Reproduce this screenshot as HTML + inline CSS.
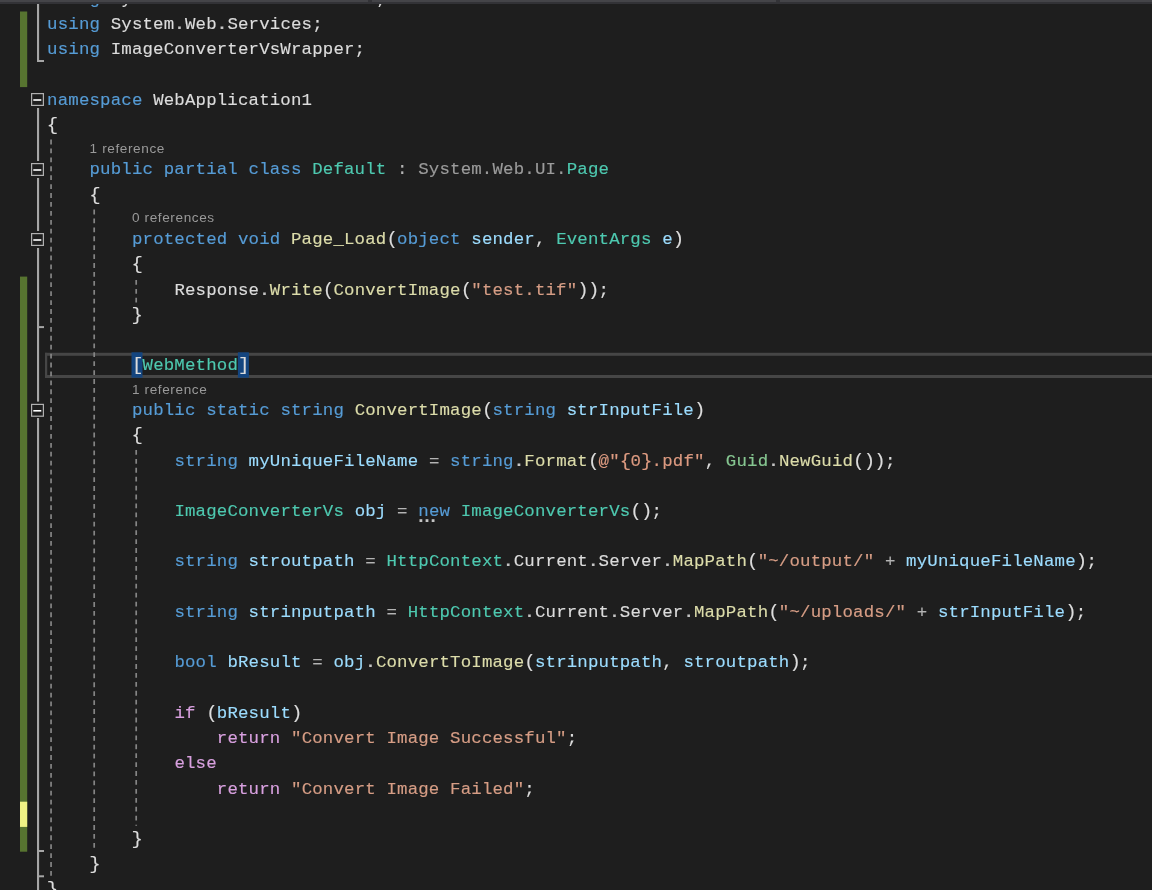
<!DOCTYPE html>
<html><head><meta charset="utf-8"><title>Default.aspx.cs</title>
<style>
html,body{margin:0;padding:0;background:#1e1e1e;}
body{width:1152px;height:890px;overflow:hidden;position:relative;font-family:"Liberation Mono",monospace;}
#ed{position:absolute;left:0;top:0;width:1152px;height:890px;overflow:hidden;background:#1e1e1e;}
.ln{position:absolute;white-space:pre;font-family:"Liberation Mono",monospace;font-size:17.40px;line-height:26px;height:26px;letter-spacing:0.167px;color:#dcdcdc;-webkit-text-stroke-width:0.15px;}
.k{color:#569cd6;}
.c{color:#d8a0df;}
.t{color:#4ec9b0;}
.s{color:#86c691;}
.m{color:#dcdcaa;}
.v{color:#9cdcfe;}
.q{color:#d69d85;}
.Q{color:#dc9a80;}
.p{color:#dcdcdc;}
.o{color:#b4b4b4;}
.f{color:#9b9b9b;}
.n{color:#dcdcdc;}
.br{color:#dcdcdc;}
.bl{font-size:19px;letter-spacing:0;}
.ln i{font-style:normal;font-size:19px;line-height:0;letter-spacing:-0.793px;}
.nw{color:#569cd6;}
.d{color:#c4c4c4;font-weight:bold;}
.cl{position:absolute;white-space:pre;font-family:"Liberation Sans",sans-serif;font-size:13.60px;line-height:18px;height:18px;color:#999999;letter-spacing:0.6px;}
.abs{position:absolute;}
#tx{position:absolute;left:0;top:0;width:1152px;height:890px;will-change:transform;}
</style></head><body><div id="ed">
<svg class="abs" style="left:0;top:0" width="1152" height="890" viewBox="0 0 1152 890"><rect x="20.00" y="11.50" width="7.20" height="75.60" fill="#577430" />
<rect x="20.00" y="276.60" width="7.20" height="575.10" fill="#577430" />
<rect x="20.00" y="801.70" width="7.20" height="25.20" fill="#eff284" />
<rect x="45.00" y="352.80" width="1107.00" height="3.00" fill="#464646" />
<rect x="45.00" y="375.00" width="1107.00" height="3.00" fill="#464646" />
<rect x="45.00" y="352.80" width="2.20" height="25.20" fill="#464646" />
<line x1="51.05" y1="139.60" x2="51.05" y2="876.00" stroke="#858585" stroke-width="1.70" stroke-dasharray="4.80 4.12"/>
<line x1="94.20" y1="209.60" x2="94.20" y2="848.00" stroke="#858585" stroke-width="1.70" stroke-dasharray="4.80 4.12"/>
<line x1="136.20" y1="280.00" x2="136.20" y2="302.40" stroke="#858585" stroke-width="1.70" stroke-dasharray="4.80 4.12"/>
<line x1="136.20" y1="450.00" x2="136.20" y2="825.80" stroke="#858585" stroke-width="1.70" stroke-dasharray="4.80 4.12"/>
<rect x="37.00" y="4.00" width="2.10" height="58.00" fill="#a6a6a6" />
<rect x="37.00" y="60.00" width="7.00" height="2.00" fill="#a6a6a6" />
<rect x="37.00" y="108.00" width="2.10" height="53.00" fill="#a6a6a6" />
<rect x="37.00" y="178.00" width="2.10" height="53.00" fill="#a6a6a6" />
<rect x="37.00" y="248.00" width="2.10" height="153.60" fill="#a6a6a6" />
<rect x="37.00" y="418.00" width="2.10" height="472.00" fill="#a6a6a6" />
<rect x="37.00" y="326.10" width="7.00" height="2.00" fill="#a6a6a6" />
<rect x="37.00" y="850.00" width="7.00" height="2.00" fill="#a6a6a6" />
<rect x="37.00" y="875.30" width="7.00" height="2.00" fill="#a6a6a6" />
<rect x="31.60" y="93.60" width="11.8" height="11.8" fill="#1e1e1e" stroke="#b0b0b0" stroke-width="1.2"/>
<rect x="33.30" y="99.20" width="8.00" height="1.60" fill="#ffffff" />
<rect x="31.60" y="163.60" width="11.8" height="11.8" fill="#1e1e1e" stroke="#b0b0b0" stroke-width="1.2"/>
<rect x="33.30" y="169.20" width="8.00" height="1.60" fill="#ffffff" />
<rect x="31.60" y="233.60" width="11.8" height="11.8" fill="#1e1e1e" stroke="#b0b0b0" stroke-width="1.2"/>
<rect x="33.30" y="239.20" width="8.00" height="1.60" fill="#ffffff" />
<rect x="31.60" y="404.40" width="11.8" height="11.8" fill="#1e1e1e" stroke="#b0b0b0" stroke-width="1.2"/>
<rect x="33.30" y="410.00" width="8.00" height="1.60" fill="#ffffff" />
<rect x="131.50" y="352.30" width="11.00" height="25.40" fill="#14457f" />
<rect x="237.90" y="352.30" width="11.00" height="25.40" fill="#14457f" />
<rect x="419.50" y="519.20" width="2.80" height="2.80" fill="#c4c4c4" />
<rect x="425.60" y="519.20" width="2.80" height="2.80" fill="#c4c4c4" />
<rect x="431.70" y="519.20" width="2.80" height="2.80" fill="#c4c4c4" /></svg>
<div id="tx">
<div class="ln" style="left:47.10px;top:-13px"><span class="k">using</span><span class="p"> System</span><span class="d">.</span><span class="p">Web</span><span class="d">.</span><span class="p">UI</span><span class="d">.</span><span class="p">WebControls;</span></div>
<div class="ln" style="left:47.10px;top:12px"><span class="k">using</span><span class="p"> System</span><span class="d">.</span><span class="p">Web</span><span class="d">.</span><span class="p">Services;</span></div>
<div class="ln" style="left:47.10px;top:37px"><span class="k">using</span><span class="p"> ImageConverterVsWrapper;</span></div>
<div class="ln" style="left:47.10px;top:88px"><span class="k">namespace</span><span class="p"> WebApplication1</span></div>
<div class="ln bl" style="left:46.70px;top:112px">{</div>
<div class="ln" style="left:89.53px;top:157px"><span class="k">public partial class </span><span class="t">Default</span><span class="p"> </span><span class="o">:</span><span class="p"> </span><span class="f">System.Web.UI.</span><span class="t">Page</span></div>
<div class="ln bl" style="left:89.13px;top:182px">{</div>
<div class="ln" style="left:131.96px;top:227px"><span class="k">protected void </span><span class="m">Page_Load</span><span class="p"><i>(</i></span><span class="k">object </span><span class="v">sender</span><span class="p">, </span><span class="t">EventArgs</span><span class="p"> </span><span class="v">e</span><span class="p"><i>)</i></span></div>
<div class="ln bl" style="left:131.56px;top:251px">{</div>
<div class="ln" style="left:174.38px;top:278px"><span class="p">Response</span><span class="d">.</span><span class="m">Write</span><span class="p"><i>(</i></span><span class="m">ConvertImage</span><span class="p"><i>(</i></span><span class="q">"test.tif"</span><span class="p"><i>))</i>;</span></div>
<div class="ln bl" style="left:131.56px;top:302px">}</div>
<div class="ln" style="left:131.96px;top:353px"><span class="br"><i>[</i></span><span class="t">WebMethod</span><span class="br"><i>]</i></span></div>
<div class="ln" style="left:131.96px;top:398px"><span class="k">public static string </span><span class="m">ConvertImage</span><span class="p"><i>(</i></span><span class="k">string </span><span class="v">strInputFile</span><span class="p"><i>)</i></span></div>
<div class="ln bl" style="left:131.56px;top:422px">{</div>
<div class="ln" style="left:174.38px;top:449px"><span class="k">string </span><span class="v">myUniqueFileName</span><span class="p"> </span><span class="o">=</span><span class="p"> </span><span class="k">string</span><span class="d">.</span><span class="m">Format</span><span class="p"><i>(</i></span><span class="Q">@"<i>{</i>0<i>}</i>.pdf"</span><span class="p">, </span><span class="s">Guid</span><span class="d">.</span><span class="m">NewGuid</span><span class="p"><i>())</i>;</span></div>
<div class="ln" style="left:174.38px;top:499px"><span class="t">ImageConverterVs</span><span class="p"> </span><span class="v">obj</span><span class="p"> </span><span class="o">=</span><span class="p"> </span><span class="nw">new</span><span class="p"> </span><span class="t">ImageConverterVs</span><span class="p"><i>()</i>;</span></div>
<div class="ln" style="left:174.38px;top:549px"><span class="k">string </span><span class="v">stroutpath</span><span class="p"> </span><span class="o">=</span><span class="p"> </span><span class="t">HttpContext</span><span class="d">.</span><span class="p">Current</span><span class="d">.</span><span class="p">Server</span><span class="d">.</span><span class="m">MapPath</span><span class="p"><i>(</i></span><span class="q">"~/output/"</span><span class="p"> </span><span class="o">+</span><span class="p"> </span><span class="v">myUniqueFileName</span><span class="p"><i>)</i>;</span></div>
<div class="ln" style="left:174.38px;top:600px"><span class="k">string </span><span class="v">strinputpath</span><span class="p"> </span><span class="o">=</span><span class="p"> </span><span class="t">HttpContext</span><span class="d">.</span><span class="p">Current</span><span class="d">.</span><span class="p">Server</span><span class="d">.</span><span class="m">MapPath</span><span class="p"><i>(</i></span><span class="q">"~/uploads/"</span><span class="p"> </span><span class="o">+</span><span class="p"> </span><span class="v">strInputFile</span><span class="p"><i>)</i>;</span></div>
<div class="ln" style="left:174.38px;top:650px"><span class="k">bool </span><span class="v">bResult</span><span class="p"> </span><span class="o">=</span><span class="p"> </span><span class="v">obj</span><span class="d">.</span><span class="m">ConvertToImage</span><span class="p"><i>(</i></span><span class="v">strinputpath</span><span class="p">, </span><span class="v">stroutpath</span><span class="p"><i>)</i>;</span></div>
<div class="ln" style="left:174.38px;top:701px"><span class="c">if</span><span class="p"> <i>(</i></span><span class="v">bResult</span><span class="p"><i>)</i></span></div>
<div class="ln" style="left:216.81px;top:726px"><span class="c">return</span><span class="p"> </span><span class="q">"Convert Image Successful"</span><span class="p">;</span></div>
<div class="ln" style="left:174.38px;top:751px"><span class="c">else</span></div>
<div class="ln" style="left:216.81px;top:777px"><span class="c">return</span><span class="p"> </span><span class="q">"Convert Image Failed"</span><span class="p">;</span></div>
<div class="ln bl" style="left:131.56px;top:826px">}</div>
<div class="ln bl" style="left:89.13px;top:851px">}</div>
<div class="ln bl" style="left:46.70px;top:876px">}</div>
<div class="cl" style="left:89.60px;top:139.59px">1 reference</div>
<div class="cl" style="left:132.00px;top:209.39px">0 references</div>
<div class="cl" style="left:132.00px;top:380.69px">1 reference</div>
</div>
<div class="abs" style="left:0;top:0;width:1152px;height:2px;background:#444448"></div>
<div class="abs" style="left:0;top:2px;width:1152px;height:2px;background:#323236"></div>
<div class="abs" style="left:368px;top:0;width:4px;height:2px;background:#333337"></div>
<div class="abs" style="left:776px;top:0;width:4px;height:2px;background:#333337"></div>
</div></body></html>
